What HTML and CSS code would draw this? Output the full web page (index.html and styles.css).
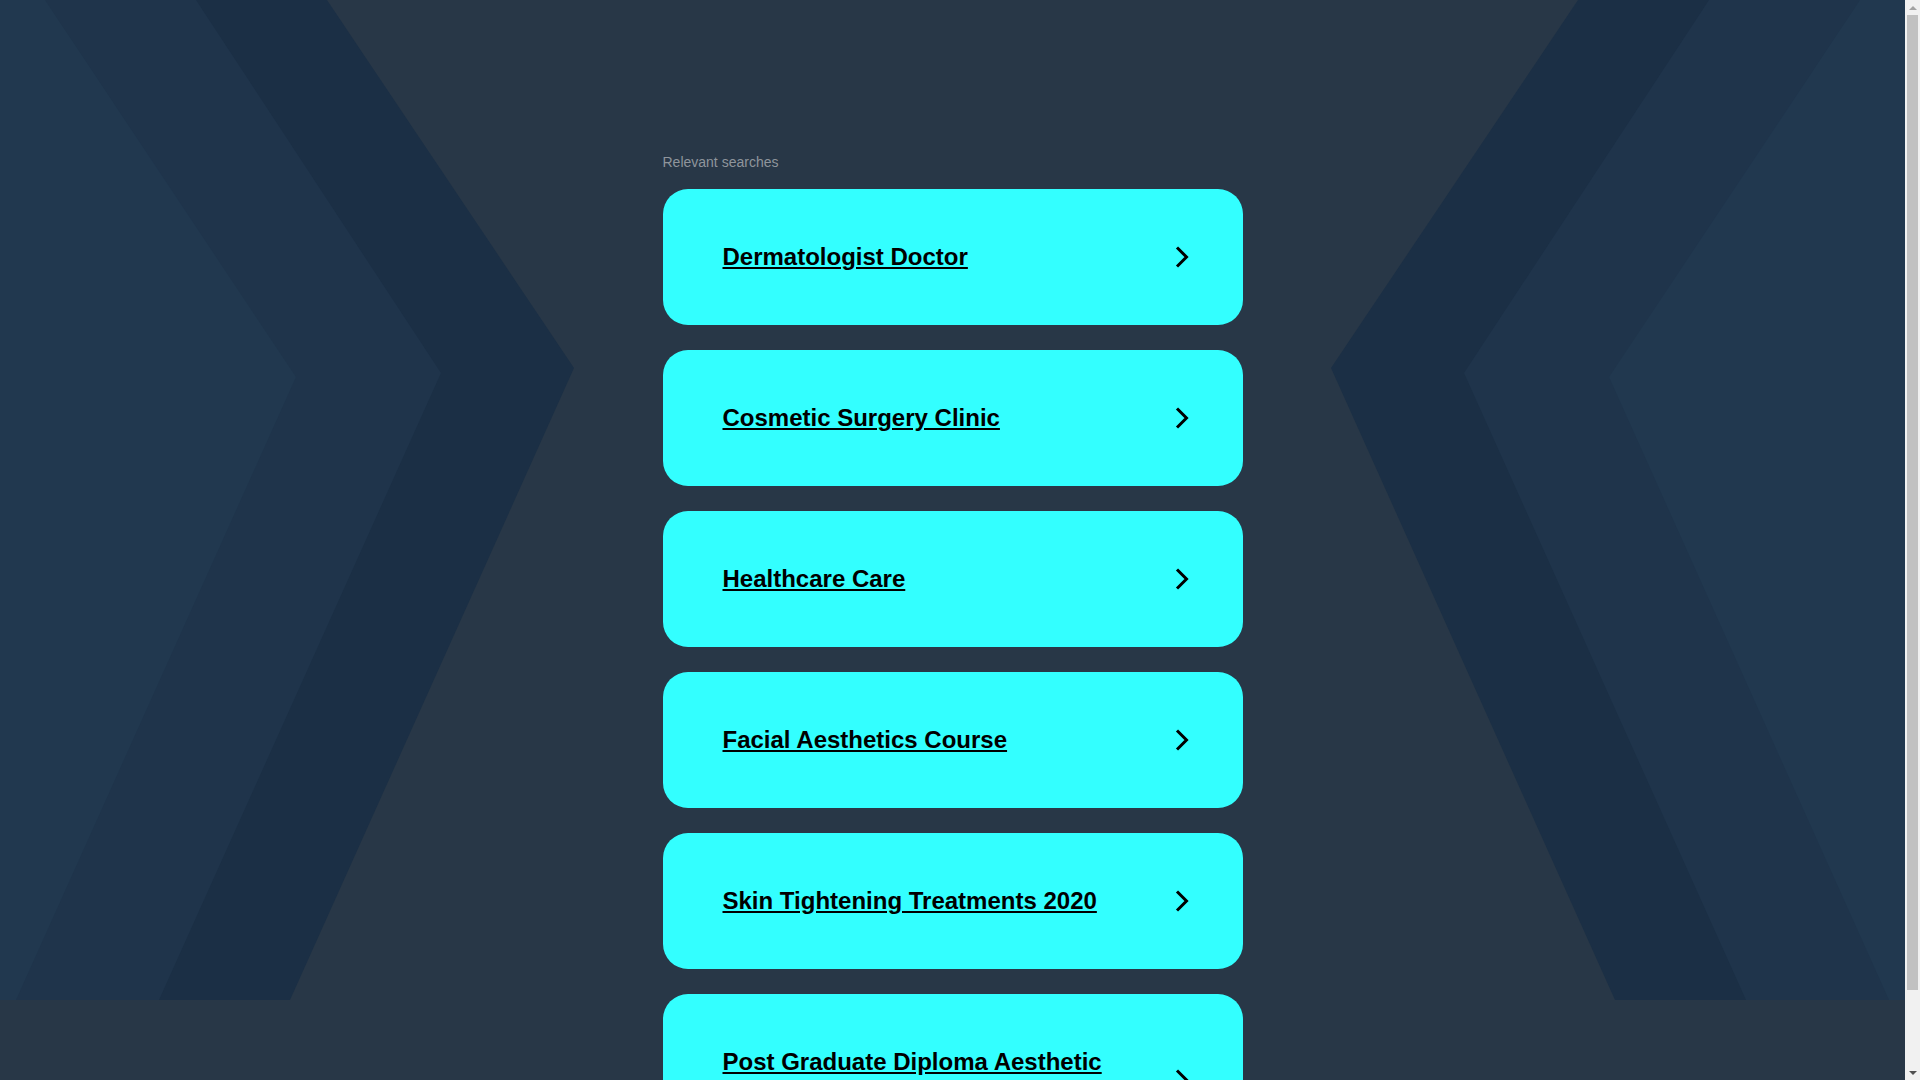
FILE: index.html
```html
<!DOCTYPE html>
<html lang="en">
<head>
<meta charset="utf-8">
<title>Relevant searches</title>
<link rel="stylesheet" href="styles.css">
</head>
<body>
<div class="page">
  <svg class="bg" viewBox="0 0 1905 1000" preserveAspectRatio="none" aria-hidden="true">
    <polygon points="0,0 327,0 574,368 290,1000 0,1000" fill="#1b2f45"/>
    <polygon points="0,0 196,0 441,373 159,1000 0,1000" fill="#1f344b"/>
    <polygon points="0,0 45,0 296,377 16,1000 0,1000" fill="#21384f"/>
    <polygon points="1905,0 1578,0 1331,368 1615,1000 1905,1000" fill="#1b2f45"/>
    <polygon points="1905,0 1709,0 1464,373 1746,1000 1905,1000" fill="#1f344b"/>
    <polygon points="1905,0 1860,0 1609,377 1889,1000 1905,1000" fill="#21384f"/>
  </svg>
  <main class="content">
    <p class="label">Relevant searches</p>
    <ul class="list">
      <li><a class="card" href="#"><span class="card-text">Dermatologist Doctor</span><svg class="chev" viewBox="0 0 14 22"><polyline points="2,1.5 11.5,11 2,20.5"/></svg></a></li>
      <li><a class="card" href="#"><span class="card-text">Cosmetic Surgery Clinic</span><svg class="chev" viewBox="0 0 14 22"><polyline points="2,1.5 11.5,11 2,20.5"/></svg></a></li>
      <li><a class="card" href="#"><span class="card-text">Healthcare Care</span><svg class="chev" viewBox="0 0 14 22"><polyline points="2,1.5 11.5,11 2,20.5"/></svg></a></li>
      <li><a class="card" href="#"><span class="card-text">Facial Aesthetics Course</span><svg class="chev" viewBox="0 0 14 22"><polyline points="2,1.5 11.5,11 2,20.5"/></svg></a></li>
      <li><a class="card" href="#"><span class="card-text">Skin Tightening Treatments 2020</span><svg class="chev" viewBox="0 0 14 22"><polyline points="2,1.5 11.5,11 2,20.5"/></svg></a></li>
      <li><a class="card" href="#"><span class="card-text">Post Graduate Diploma Aesthetic Medicine</span><svg class="chev" viewBox="0 0 14 22"><polyline points="2,1.5 11.5,11 2,20.5"/></svg></a></li>
    </ul>
  </main>
</div>
<div class="scrollbar" aria-hidden="true">
  <span class="sb-arrow sb-up"></span>
  <span class="sb-track"><span class="sb-thumb"></span></span>
  <span class="sb-arrow sb-down"></span>
</div>
</body>
</html>
```
FILE: styles.css
```css
html, body {
  margin: 0;
  padding: 0;
  background: #283747;
}

body {
  font-family: "Liberation Sans", Arial, sans-serif;
  display: flex;
  align-items: flex-start;
}

.page {
  position: relative;
  flex: 1;
  min-width: 0;
}

.bg {
  position: absolute;
  top: 0;
  left: 0;
  width: 100%;
  height: 1000px;
  display: block;
  z-index: 0;
}

.content {
  position: relative;
  z-index: 1;
  width: 580px;
  margin: 0 auto;
  padding: 154px 0 25px;
}

.label {
  margin: 0 0 19px;
  font-size: 14px;
  line-height: 16px;
  color: #8f959c;
}

.list {
  list-style: none;
  margin: 0;
  padding: 0;
  display: flex;
  flex-direction: column;
  gap: 25px;
}

.card {
  display: flex;
  align-items: center;
  background: #33ffff;
  border-radius: 25px;
  padding: 50px 54px 50px 60px;
  color: #000;
  text-decoration: none;
}

.card-text {
  flex: 1;
  font-size: 24px;
  font-weight: 700;
  line-height: 36px;
  text-decoration: underline;
  color: #000;
}

.chev {
  flex: none;
  width: 14px;
  height: 22px;
  margin-left: 20px;
}

.chev polyline {
  fill: none;
  stroke: #000;
  stroke-width: 3;
}

/* imitation of the browser's classic vertical scrollbar */
.scrollbar {
  position: sticky;
  top: 0;
  flex: none;
  width: 15px;
  height: 100vh;
  background: #f1f1f1;
  display: flex;
  flex-direction: column;
}

.sb-arrow {
  flex: none;
  height: 15px;
  display: flex;
  align-items: center;
  justify-content: center;
}

.sb-arrow::before {
  content: "";
  width: 0;
  height: 0;
  border-left: 4px solid transparent;
  border-right: 4px solid transparent;
}

.sb-up::before {
  border-bottom: 4px solid #a3a3a3;
}

.sb-down::before {
  border-top: 4px solid #505050;
}

.sb-track {
  flex: 1;
  display: flex;
  flex-direction: column;
  padding: 0 2px;
}

.sb-thumb {
  height: 975px;
  background: #c1c1c1;
}
```
